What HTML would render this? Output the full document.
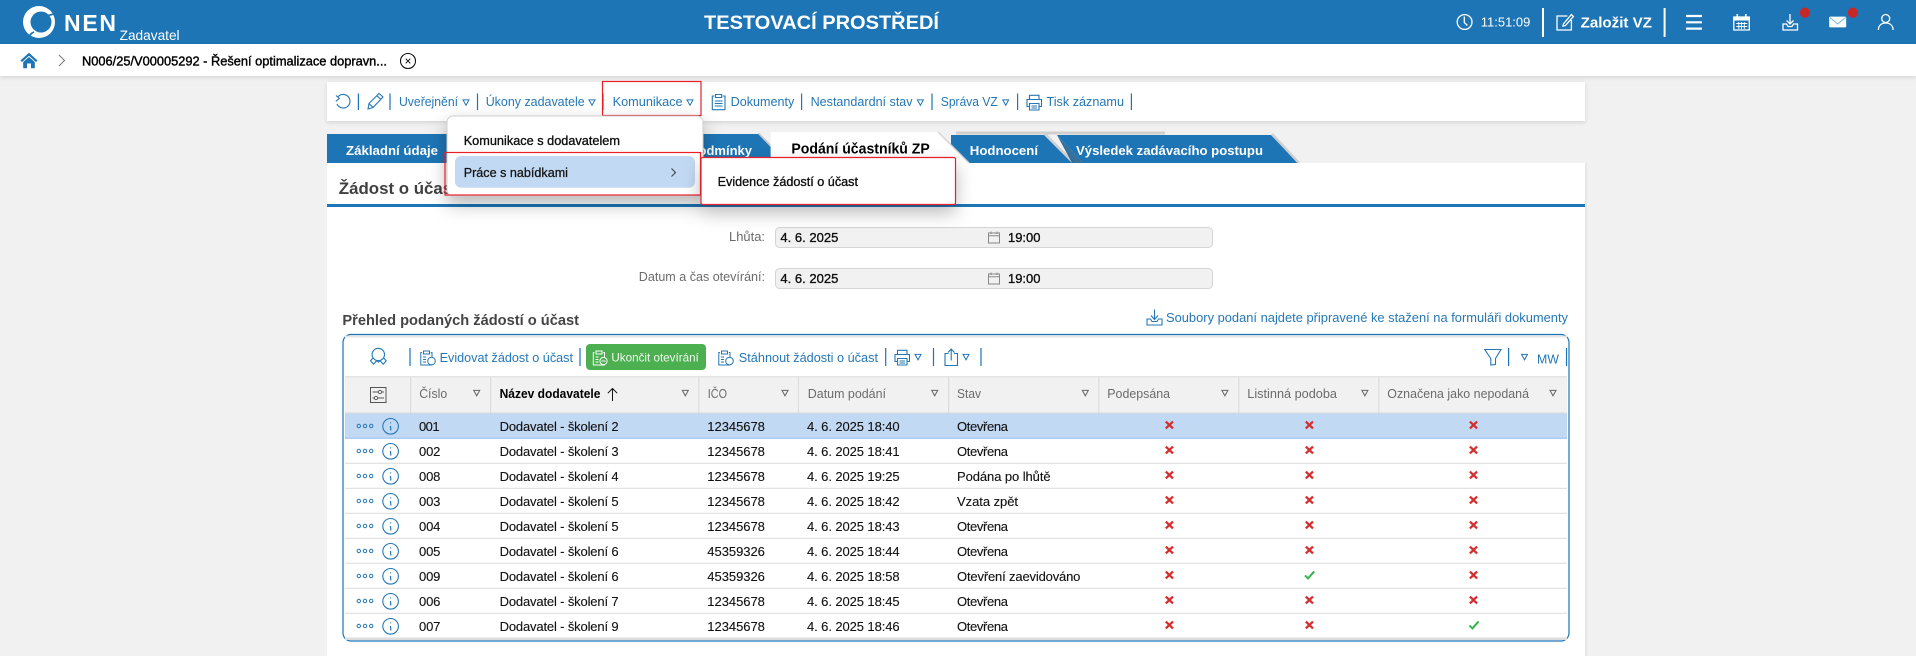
<!DOCTYPE html>
<html lang="cs"><head><meta charset="utf-8"><title>NEN Zadavatel</title>
<style>
html,body{margin:0;padding:0;background:#f1f1f1;width:1916px;height:656px;overflow:hidden}
svg{display:block;font-family:"Liberation Sans",Arial,sans-serif}
text{white-space:pre}
.r{font-size:13px;fill:#111;stroke:#111;stroke-width:.12px}
.h{font-size:13px;fill:#6b6b6b}
.l{font-size:13px;fill:#2577b6}
.m{stroke:currentColor;stroke-width:.3px}
.w{fill:#fff}
.is{fill:none;stroke:#2577b6;stroke-width:1.1}
.iw{fill:none;stroke:#fff;stroke-width:1.3}
.sep{stroke:#1d75b5;stroke-width:1.2}
</style></head><body>
<svg xmlns="http://www.w3.org/2000/svg" width="1916" height="656" viewBox="0 0 1916 656">
<defs>
<filter id="sh" x="-30%" y="-40%" width="160%" height="220%"><feDropShadow dx="0" dy="8" stdDeviation="9" flood-color="#000" flood-opacity=".28"/></filter>
<filter id="s2" x="-2%" y="-30%" width="104%" height="170%"><feDropShadow dx="0" dy="1.5" stdDeviation="2" flood-color="#000" flood-opacity=".13"/></filter>
<path id="tb" d="M-3 -2.6H3L0 2.8Z" fill="none" stroke="#2577b6" stroke-width="1"/>
<path id="tg" d="M-3 -2.6H3L0 2.8Z" fill="none" stroke="#666" stroke-width="1"/>
<g id="act"><circle cx="358.8" cy="0" r="1.7" fill="none" stroke="#2577b6"/><circle cx="365" cy="0" r="1.7" fill="none" stroke="#2577b6"/><circle cx="371.2" cy="0" r="1.7" fill="none" stroke="#2577b6"/><circle cx="390.6" cy=".3" r="7.8" fill="none" stroke="#2577b6" stroke-width="1.1"/><path d="M390.2 -3.1h.9M390.4 -.1l.5 4.6" fill="none" stroke="#2577b6" stroke-width="1.2"/></g>
<path id="x" d="M-3.6 -3.4L3.6 3.4M3.6 -3.4L-3.6 3.4" fill="none" stroke="#d22f2f" stroke-width="2.3"/>
<path id="c" d="M-4.6 .4L-1.6 3.4L4.6 -3.6" fill="none" stroke="#35b44a" stroke-width="2"/>
<g id="clip"><path d="M2 3.5H0.8V16H12V3.5H10.8M3.5 2H9.5V5H3.5Z" fill="none" stroke="#2577b6" stroke-width="1"/><path d="M3 8H6M3 10.5H6M3 13H6" stroke="#2577b6" stroke-width=".9"/><circle cx="11.5" cy="12" r="3.8" fill="#fff" stroke="#2577b6"/></g>
<g id="print" fill="none" stroke="#2577b6" stroke-width="1.1"><path d="M3.5 5V.8H13V5M3.5 12H1V5H15.5V12H13"/><path d="M3.5 9H13V15.5H3.5ZM5.5 11.5H11M5.5 13.5H11"/></g>
<g id="cal" fill="none" stroke="#888" stroke-width="1"><rect x=".5" y="1.5" width="11" height="10" /><path d="M.5 4.2H11.5M3 0V2.5M9 0V2.5"/></g>
</defs>

<rect width="1916" height="656" fill="#f1f1f1"/>

<!-- header -->
<rect width="1916" height="44" fill="#1d75b5"/>
<circle cx="39" cy="22" r="16" fill="#fff"/>
<circle cx="41" cy="22" r="10.5" fill="#1d75b5"/>
<path d="M57 12C53 15 50 15 47 15.5M34 32C31 33 30 35 28 39" fill="none" stroke="#1d75b5" stroke-width="1.7"/>
<text x="64" y="31" font-size="23" font-weight="700" class="w" textLength="52" lengthAdjust="spacing">NEN</text>
<text x="119.6" y="40" font-size="14" class="w" textLength="60" lengthAdjust="spacingAndGlyphs">Zadavatel</text>
<text x="704" y="29" font-size="19" font-weight="700" class="w" textLength="235" lengthAdjust="spacingAndGlyphs">TESTOVACÍ PROSTŘEDÍ</text>
<g transform="translate(-1.1,0)"><circle cx="1465.7" cy="22" r="7.4" class="iw" stroke-width="1.1"/><path d="M1465.4 16.5V22.5L1468.5 25.5" class="iw"/></g>
<text x="1480.8" y="26.7" font-size="13" class="w" textLength="49.5" lengthAdjust="spacingAndGlyphs">11:51:09</text>
<rect x="1542" y="8" width="2" height="29" fill="#fff"/>
<g transform="translate(-1.6,0)"><path d="M1569 16H1558.6V30H1573V20M1565 24L1573 14.5L1575 16.5L1567 25.5L1564.6 26Z" class="iw"/></g>
<text x="1580.6" y="27.5" font-size="15" font-weight="700" class="w" textLength="71.4" lengthAdjust="spacingAndGlyphs">Založit VZ</text>
<rect x="1663.6" y="8" width="2" height="29" fill="#fff"/>
<g transform="translate(-2.6,0)"><path d="M1688.6 16H1704.5M1688.6 22.3H1704.5M1688.6 28.6H1704.5" stroke="#fff" stroke-width="2.2"/></g>
<g transform="translate(-2.7,0)"><path d="M1736.5 17H1752V30H1736.5Z" class="iw"/><rect x="1736" y="16.5" width="16.5" height="4" fill="#fff"/><path d="M1740 14V18M1748.5 14V18" stroke="#fff" stroke-width="1.6"/><path d="M1739 23.5H1750M1739 26.5H1750M1741.5 22V29M1744.2 22V29M1747 22V29" stroke="#fff" stroke-width=".9"/></g>
<g transform="translate(-3,0)"><path d="M1793 14V23.5M1789.6 20.5L1793 24L1796.5 20.5" class="iw"/><path d="M1786 24H1789.5L1791 26.5H1795L1796.5 24H1800.5V30H1786Z" class="iw"/>
<circle cx="1808" cy="12.7" r="5.2" fill="#c62828"/></g>
<g transform="translate(-3.4,0)"><rect x="1832.6" y="16.6" width="17" height="10.8" rx="1" fill="#fff"/><path d="M1833.5 17.5L1841 24L1849 17.5" fill="none" stroke="#7db2db" stroke-width="1"/>
<circle cx="1856.3" cy="12.7" r="5.2" fill="#c62828"/></g>
<g transform="translate(-3.6,0)"><circle cx="1889.3" cy="18.5" r="4" class="iw"/><path d="M1882 30C1882 25.5 1885 23 1889.3 23C1893.6 23 1896.7 25.5 1896.7 30" class="iw"/></g>

<!-- breadcrumb -->
<rect y="44" width="1916" height="32" fill="#fff" filter="url(#s2)"/>
<path d="M20.4 60.5L29 52.7L37.5 60.5L36 62L29 55.8L22 62Z" fill="#1d75b5"/><path d="M23.2 62L29 57L34.8 62V68.3H31V63.5H27V68.3H23.2Z" fill="#1d75b5"/>
<path d="M59 55L64.5 60.5L59 66" fill="none" stroke="#777" stroke-width="1"/>
<text x="82" y="65.5" font-size="13" fill="#000" color="#000" stroke="#000" stroke-width=".4" textLength="305" lengthAdjust="spacingAndGlyphs">N006/25/V00005292 - Řešení optimalizace dopravn...</text>
<circle cx="408" cy="61" r="7.5" fill="none" stroke="#111" stroke-width="1.1"/><path d="M405.7 58.7L410.3 63.3M410.3 58.7L405.7 63.3" stroke="#111" stroke-width="1"/>

<!-- toolbar -->
<rect x="327" y="82" width="1258" height="39" fill="#fff" filter="url(#s2)"/>
<path d="M337.5 98.5A6.8 6.8 0 1 1 337 105M335.8 102.3L339.3 99.5L336 96.5" class="is" transform="translate(0,-1)"/>
<path class="sep" d="M358.4 93.5V110M390 93.5V110M477.5 93.5V110M603 93.5V110M801.6 93.5V110M932 93.5V110M1017.6 93.5V110M1131.4 93.5V110"/>
<path d="M368 109L369 103.5L379 93.5L383 97L373 107.5ZM369 103.5L373 107.5M376.8 95.7L380.8 99.3" class="is"/>
<text x="399" y="106" class="l" textLength="59" lengthAdjust="spacingAndGlyphs">Uveřejnění</text><use href="#tb" x="466" y="102.5"/>
<text x="485.7" y="106" class="l" textLength="99" lengthAdjust="spacingAndGlyphs">Úkony zadavatele</text><use href="#tb" x="592" y="102.5"/>
<text x="612.6" y="106" class="l" textLength="70" lengthAdjust="spacingAndGlyphs">Komunikace</text><use href="#tb" x="690" y="102.5"/>
<path d="M714.5 96H712.3V109.7H725V96H722.8M715.5 94.5H721.7V97.5H715.5ZM714.8 101H722.5M714.8 103.5H722.5M714.8 106H722.5" class="is"/>
<text x="730.6" y="106" class="l" textLength="63.7" lengthAdjust="spacingAndGlyphs">Dokumenty</text>
<text x="810.6" y="106" class="l" textLength="102" lengthAdjust="spacingAndGlyphs">Nestandardní stav</text><use href="#tb" x="920.4" y="102.5"/>
<text x="940.8" y="106" class="l" textLength="57" lengthAdjust="spacingAndGlyphs">Správa VZ</text><use href="#tb" x="1005.7" y="102.5"/>
<use href="#print" x="1026" y="94.5"/>
<text x="1046.5" y="106" class="l" textLength="77.5" lengthAdjust="spacingAndGlyphs">Tisk záznamu</text>
<rect x="602.5" y="81.5" width="98.5" height="34" fill="none" stroke="#e8202a" stroke-width="1.2"/>

<!-- tabs -->
<rect x="956" y="131.5" width="209" height="3" fill="#cfcfcf"/>
<path d="M758 133.5L788 163" stroke="#c8c8c8" stroke-width="2.4" fill="none"/>
<path d="M327 134H758L786 163H327Z" fill="#1d75b5"/>
<path d="M1045 134L1074 163" stroke="#cfcfcf" stroke-width="2.5" fill="none"/>
<path d="M951 135H1044L1072 163H951Z" fill="#1d75b5"/>
<path d="M1057 135H1271L1298 163H1083Z" fill="#1d75b5"/>
<path d="M1057 135L1083 163H1072Z" fill="#155a8f" opacity=".85"/>
<path d="M1272 134L1299 163" stroke="#cfcfcf" stroke-width="2.5" fill="none"/>
<path d="M770.6 132H938L969 163H770.6Z" fill="#fff"/>
<path d="M938 132L969 163" stroke="#d5d5d5" stroke-width="1.4" fill="none"/>
<text x="346" y="155" font-size="13" font-weight="700" class="w" textLength="92" lengthAdjust="spacingAndGlyphs">Základní údaje</text>
<text x="752" y="155" font-size="13" font-weight="700" class="w" text-anchor="end">Podmínky</text>
<text x="791.4" y="153.5" font-size="15" font-weight="700" fill="#000" textLength="138.4" lengthAdjust="spacingAndGlyphs">Podání účastníků ZP</text>
<text x="969.8" y="155" font-size="13" font-weight="700" class="w" textLength="68.2" lengthAdjust="spacingAndGlyphs">Hodnocení</text>
<text x="1076" y="155" font-size="13" font-weight="700" class="w" textLength="187" lengthAdjust="spacingAndGlyphs">Výsledek zadávacího postupu</text>

<!-- panel -->
<rect x="327" y="163" width="1258" height="493" fill="#fff"/>
<rect x="1585" y="163" width="2" height="493" fill="#e6e6e6"/>
<rect x="327" y="204" width="1258" height="3" fill="#1d75b5"/>
<text x="338.8" y="194" font-size="17" font-weight="700" fill="#404040" textLength="119" lengthAdjust="spacingAndGlyphs">Žádost o účast</text>

<!-- form -->
<text x="729" y="241" class="h" textLength="36" lengthAdjust="spacingAndGlyphs">Lhůta:</text>
<rect x="775.5" y="227.5" width="437" height="20" rx="4" fill="#f1f1f1" stroke="#d5d5d5"/>
<text x="780.4" y="242" class="r m" color="#000" textLength="58" lengthAdjust="spacingAndGlyphs">4. 6. 2025</text>
<use href="#cal" x="988" y="231.5"/>
<text x="1008" y="242" class="r m" color="#000" textLength="32.4" lengthAdjust="spacingAndGlyphs">19:00</text>
<text x="638.8" y="281" class="h" textLength="126.2" lengthAdjust="spacingAndGlyphs">Datum a čas otevírání:</text>
<rect x="775.5" y="268.5" width="437" height="20" rx="4" fill="#f1f1f1" stroke="#d5d5d5"/>
<text x="780.4" y="283" class="r m" color="#000" textLength="58" lengthAdjust="spacingAndGlyphs">4. 6. 2025</text>
<use href="#cal" x="988" y="272.5"/>
<text x="1008" y="283" class="r m" color="#000" textLength="32.4" lengthAdjust="spacingAndGlyphs">19:00</text>

<text x="342.4" y="325" font-size="15" font-weight="700" fill="#444" textLength="236.6" lengthAdjust="spacingAndGlyphs">Přehled podaných žádostí o účast</text>
<path d="M1154.5 309.5V319M1151 315.5L1154.5 319.5L1158 315.5M1147 319H1150.5L1152 321.5H1157L1158.5 319H1162V325H1147Z" class="is"/>
<text x="1166" y="322" class="l" textLength="402" lengthAdjust="spacingAndGlyphs">Soubory podaní najdete připravené ke stažení na formuláři dokumenty</text>

<!-- table -->
<rect x="343" y="334.5" width="1226" height="306.5" rx="8" fill="#fff" stroke="#1d75b5" stroke-width="1.2"/>
<rect x="345" y="335.5" width="1222" height="2" fill="#e6e6e6"/>
<rect x="345" y="637.5" width="1222" height="2.5" fill="#dcdcdc"/>
<rect x="345" y="376.5" width="1222" height="37" fill="#f1f1f1"/>
<path d="M345 376.7H1567M345 413H1567" stroke="#dcdcdc" stroke-width="1"/>
<path d="M410.6 377V413M490.6 377V413M698.8 377V413M798.4 377V413M948.6 377V413M1098.8 377V413M1238.8 377V413M1378.8 377V413" stroke="#dcdcdc" stroke-width="1.2"/>

<!-- table toolbar -->
<circle cx="378.3" cy="354.5" r="6.2" class="is"/>
<path d="M373.2 357.7L370.5 360.7L373.5 364.2L376.6 360.7L378.3 362.2L380.1 360.7L383.2 364.2L386.2 360.7L383.5 357.7" class="is"/>
<path class="sep" d="M410 348V366M580 348V366M885.7 348V366M933.5 348V366M981 348V366M1508.6 348V366M1566.5 348V366"/>
<use href="#clip" x="420" y="349"/>
<text x="439.6" y="362" class="l" textLength="133.4" lengthAdjust="spacingAndGlyphs">Evidovat žádost o účast</text>
<rect x="586" y="344" width="120" height="26" rx="4" fill="#4caf50"/>
<g transform="translate(592.5,349)"><path d="M2 3.5H0.8V16H12V3.5H10.8M3.5 2H9.5V5H3.5Z" fill="none" stroke="#fff" stroke-width="1"/><circle cx="11" cy="12" r="3.6" fill="#4caf50" stroke="#fff"/><path d="M3 8H6M3 10.5H6M3 13H6M9 12H13" stroke="#fff" stroke-width=".9"/></g>
<text x="611.4" y="361.5" font-size="12" fill="#fff" fill-opacity=".92" textLength="87.4" lengthAdjust="spacingAndGlyphs">Ukončit otevírání</text>
<use href="#clip" x="718" y="349"/>
<text x="738.8" y="362" class="l" textLength="139.2" lengthAdjust="spacingAndGlyphs">Stáhnout žádosti o účast</text>
<use href="#print" x="894" y="349.5"/><use href="#tb" x="918" y="357"/>
<path d="M948.5 353.5H945V365.5H957.5V353.5H954M951.2 360.5V349.5M948 352.5L951.2 349L954.5 352.5" class="is"/><use href="#tb" x="966" y="357"/>
<path d="M1484.7 349.5H1501L1495.5 358.5V364.5L1490.8 365V358.5Z" class="is"/>
<use href="#tb" x="1524.5" y="357"/>
<text x="1537" y="363.7" class="l" textLength="22" lengthAdjust="spacingAndGlyphs">MW</text>

<!-- table head -->
<rect x="370.5" y="387.5" width="15.5" height="15" fill="none" stroke="#555" stroke-width="1"/><path d="M372.5 392H384M372.5 398H384" stroke="#555" stroke-width=".9"/><circle cx="380" cy="392" r="1.7" fill="#f1f1f1" stroke="#555" stroke-width=".9"/><circle cx="376" cy="398" r="1.7" fill="#f1f1f1" stroke="#555" stroke-width=".9"/>
<text x="419.2" y="398" class="h" textLength="28" lengthAdjust="spacingAndGlyphs">Číslo</text><use href="#tg" x="476.7" y="393"/>
<text x="499.6" y="398" font-size="13" font-weight="700" fill="#000" textLength="100.8" lengthAdjust="spacingAndGlyphs">Název dodavatele</text>
<path d="M612.5 401V388.5M607.8 393.2L612.5 388.5L617.2 393.2" fill="none" stroke="#111" stroke-width="1"/><use href="#tg" x="685.3" y="393"/>
<text x="707.8" y="398" class="h" textLength="19.2" lengthAdjust="spacingAndGlyphs">IČO</text><use href="#tg" x="785" y="393"/>
<text x="807.8" y="398" class="h" textLength="78.2" lengthAdjust="spacingAndGlyphs">Datum podání</text><use href="#tg" x="934.7" y="393"/>
<text x="957" y="398" class="h" textLength="24" lengthAdjust="spacingAndGlyphs">Stav</text><use href="#tg" x="1085.3" y="393"/>
<text x="1107.3" y="398" class="h" textLength="62.7" lengthAdjust="spacingAndGlyphs">Podepsána</text><use href="#tg" x="1224.9" y="393"/>
<text x="1247.3" y="398" class="h" textLength="89.7" lengthAdjust="spacingAndGlyphs">Listinná podoba</text><use href="#tg" x="1364.9" y="393"/>
<text x="1387.3" y="398" class="h" textLength="141.7" lengthAdjust="spacingAndGlyphs">Označena jako nepodaná</text><use href="#tg" x="1553" y="393"/>

<!-- rows -->
<rect x="345" y="413.5" width="1222" height="24.5" fill="#c2d9f4"/>
<path d="M345 438.3H1567" stroke="#8fbdee" stroke-width="1"/>
<path d="M345 463.3H1567M345 488.3H1567M345 513.3H1567M345 538.3H1567M345 563.3H1567M345 588.3H1567M345 613.3H1567" stroke="#dfdfdf" stroke-width="1.1"/>
<use href="#act" y="426"/><use href="#act" y="451"/><use href="#act" y="476"/><use href="#act" y="501"/><use href="#act" y="526"/><use href="#act" y="551"/><use href="#act" y="576"/><use href="#act" y="601"/><use href="#act" y="626"/>

<text x="419" y="431" class="r" textLength="20.6">001</text><text x="499.6" y="431" class="r" textLength="119">Dodavatel - školení 2</text><text x="707.3" y="431" class="r" textLength="57.6">12345678</text><text x="807" y="431" class="r" textLength="92.6">4. 6. 2025 18:40</text><text x="957" y="431" class="r" textLength="51">Otevřena</text>
<text x="419" y="456" class="r" textLength="21.4">002</text><text x="499.6" y="456" class="r" textLength="119">Dodavatel - školení 3</text><text x="707.3" y="456" class="r" textLength="57.6">12345678</text><text x="807" y="456" class="r" textLength="92.6">4. 6. 2025 18:41</text><text x="957" y="456" class="r" textLength="51">Otevřena</text>
<text x="419" y="481" class="r" textLength="21.4">008</text><text x="499.6" y="481" class="r" textLength="119">Dodavatel - školení 4</text><text x="707.3" y="481" class="r" textLength="57.6">12345678</text><text x="807" y="481" class="r" textLength="92.6">4. 6. 2025 19:25</text><text x="957" y="481" class="r" textLength="93.6">Podána po lhůtě</text>
<text x="419" y="506" class="r" textLength="21.4">003</text><text x="499.6" y="506" class="r" textLength="119">Dodavatel - školení 5</text><text x="707.3" y="506" class="r" textLength="57.6">12345678</text><text x="807" y="506" class="r" textLength="92.6">4. 6. 2025 18:42</text><text x="957" y="506" class="r" textLength="61">Vzata zpět</text>
<text x="419" y="531" class="r" textLength="21.4">004</text><text x="499.6" y="531" class="r" textLength="119">Dodavatel - školení 5</text><text x="707.3" y="531" class="r" textLength="57.6">12345678</text><text x="807" y="531" class="r" textLength="92.6">4. 6. 2025 18:43</text><text x="957" y="531" class="r" textLength="51">Otevřena</text>
<text x="419" y="556" class="r" textLength="21.4">005</text><text x="499.6" y="556" class="r" textLength="119">Dodavatel - školení 6</text><text x="707.3" y="556" class="r" textLength="57.6">45359326</text><text x="807" y="556" class="r" textLength="92.6">4. 6. 2025 18:44</text><text x="957" y="556" class="r" textLength="51">Otevřena</text>
<text x="419" y="581" class="r" textLength="21.4">009</text><text x="499.6" y="581" class="r" textLength="119">Dodavatel - školení 6</text><text x="707.3" y="581" class="r" textLength="57.6">45359326</text><text x="807" y="581" class="r" textLength="92.6">4. 6. 2025 18:58</text><text x="957" y="581" class="r" textLength="123.4">Otevření zaevidováno</text>
<text x="419" y="606" class="r" textLength="21.4">006</text><text x="499.6" y="606" class="r" textLength="119">Dodavatel - školení 7</text><text x="707.3" y="606" class="r" textLength="57.6">12345678</text><text x="807" y="606" class="r" textLength="92.6">4. 6. 2025 18:45</text><text x="957" y="606" class="r" textLength="51">Otevřena</text>
<text x="419" y="631" class="r" textLength="21.4">007</text><text x="499.6" y="631" class="r" textLength="119">Dodavatel - školení 9</text><text x="707.3" y="631" class="r" textLength="57.6">12345678</text><text x="807" y="631" class="r" textLength="92.6">4. 6. 2025 18:46</text><text x="957" y="631" class="r" textLength="51">Otevřena</text>

<use href="#x" x="1169.4" y="425"/><use href="#x" x="1309.4" y="425"/><use href="#x" x="1473.5" y="425"/>
<use href="#x" x="1169.4" y="450"/><use href="#x" x="1309.4" y="450"/><use href="#x" x="1473.5" y="450"/>
<use href="#x" x="1169.4" y="475"/><use href="#x" x="1309.4" y="475"/><use href="#x" x="1473.5" y="475"/>
<use href="#x" x="1169.4" y="500"/><use href="#x" x="1309.4" y="500"/><use href="#x" x="1473.5" y="500"/>
<use href="#x" x="1169.4" y="525"/><use href="#x" x="1309.4" y="525"/><use href="#x" x="1473.5" y="525"/>
<use href="#x" x="1169.4" y="550"/><use href="#x" x="1309.4" y="550"/><use href="#x" x="1473.5" y="550"/>
<use href="#x" x="1169.4" y="575"/><use href="#c" x="1309.6" y="575"/><use href="#x" x="1473.5" y="575"/>
<use href="#x" x="1169.4" y="600"/><use href="#x" x="1309.4" y="600"/><use href="#x" x="1473.5" y="600"/>
<use href="#x" x="1169.4" y="625"/><use href="#x" x="1309.4" y="625"/><use href="#c" x="1474" y="625"/>

<!-- menus -->
<rect x="447" y="116" width="256" height="80" rx="6" fill="#fff" stroke="#cfcfcf" filter="url(#sh)"/>
<text x="463.7" y="145" class="r m" color="#000" fill="#000" textLength="156.3" lengthAdjust="spacingAndGlyphs">Komunikace s dodavatelem</text>
<rect x="455" y="156" width="240" height="31.7" rx="6" fill="#c2d9f4"/>
<text x="463.7" y="177" class="r m" color="#222" textLength="104.3" lengthAdjust="spacingAndGlyphs">Práce s nabídkami</text>
<path d="M671.5 168.5L675.5 172.5L671.5 176.5" fill="none" stroke="#444" stroke-width="1.1"/>
<rect x="445" y="152.5" width="255.5" height="42.5" fill="none" stroke="#e8202a" stroke-width="1.2"/>
<rect x="701" y="157.5" width="254.5" height="47" rx="3" fill="#fff" filter="url(#sh)"/>
<rect x="701" y="157.5" width="254.5" height="47" rx="1.5" fill="none" stroke="#e8202a" stroke-width="1.2"/>
<text x="717.6" y="186" class="r m" color="#000" fill="#000" textLength="140.4" lengthAdjust="spacingAndGlyphs">Evidence žádostí o účast</text>
</svg>
</body></html>
